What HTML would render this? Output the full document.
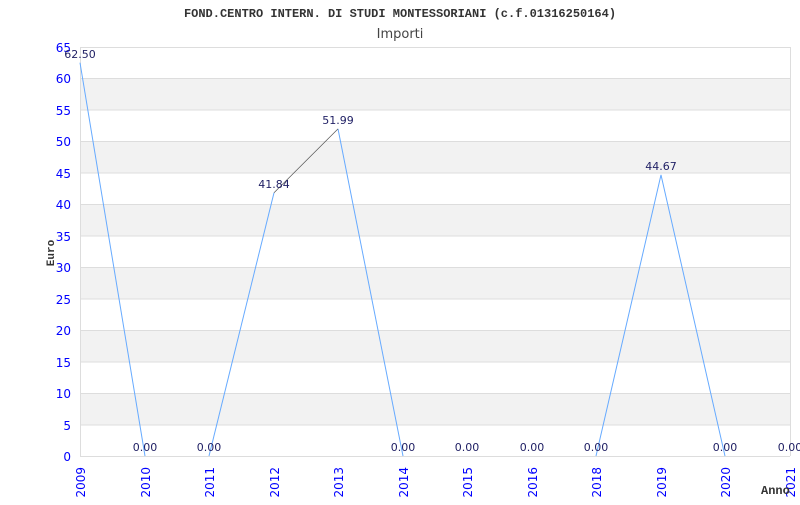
<!DOCTYPE html>
<html><head><meta charset="utf-8"><style>
body{margin:0;background:#fff;width:800px;height:500px;overflow:hidden}
</style></head><body>
<svg width="800" height="500" xmlns="http://www.w3.org/2000/svg" font-family="'DejaVu Sans','Liberation Sans',sans-serif">
<text x="400" y="17" text-anchor="middle" font-family="'Liberation Mono','DejaVu Sans Mono',monospace" font-weight="bold" font-size="12" fill="#333">FOND.CENTRO INTERN. DI STUDI MONTESSORIANI (c.f.01316250164)</text>
<text x="400" y="38" text-anchor="middle" font-size="13" fill="#444">Importi</text>
<g fill="#f2f2f2">
<rect x="80" y="78.5" width="710" height="31.5"/>
<rect x="80" y="141.4" width="710" height="31.5"/>
<rect x="80" y="204.3" width="710" height="31.5"/>
<rect x="80" y="267.2" width="710" height="31.5"/>
<rect x="80" y="330.1" width="710" height="31.5"/>
<rect x="80" y="393" width="710" height="31.5"/>
</g>
<g stroke="#ddd" stroke-width="1">
<line x1="80" y1="47.5" x2="790" y2="47.5"/><line x1="80" y1="78.5" x2="790" y2="78.5"/><line x1="80" y1="110" x2="790" y2="110"/><line x1="80" y1="141.5" x2="790" y2="141.5"/><line x1="80" y1="173" x2="790" y2="173"/><line x1="80" y1="204.5" x2="790" y2="204.5"/><line x1="80" y1="236" x2="790" y2="236"/><line x1="80" y1="267.5" x2="790" y2="267.5"/><line x1="80" y1="299" x2="790" y2="299"/><line x1="80" y1="330.5" x2="790" y2="330.5"/><line x1="80" y1="362" x2="790" y2="362"/><line x1="80" y1="393.5" x2="790" y2="393.5"/><line x1="80" y1="425" x2="790" y2="425"/><line x1="80" y1="456.5" x2="790" y2="456.5"/>
<line x1="80.5" y1="47" x2="80.5" y2="456"/><line x1="790.5" y1="47" x2="790.5" y2="456"/>
</g>
<g fill="#00f" font-size="12" text-anchor="end">
<text x="71" y="52">65</text><text x="71" y="83">60</text><text x="71" y="115">55</text><text x="71" y="146">50</text><text x="71" y="178">45</text><text x="71" y="209">40</text><text x="71" y="241">35</text><text x="71" y="272">30</text><text x="71" y="304">25</text><text x="71" y="335">20</text><text x="71" y="367">15</text><text x="71" y="398">10</text><text x="71" y="430">5</text><text x="71" y="461">0</text>
</g>
<text transform="translate(54,253) rotate(-90)" text-anchor="middle" font-family="'Liberation Mono',monospace" font-weight="bold" font-size="11" fill="#333">Euro</text>
<g fill="#00f" font-size="12" text-anchor="end">
<text transform="translate(85,467) rotate(-90)">2009</text>
<text transform="translate(150,467) rotate(-90)">2010</text>
<text transform="translate(214,467) rotate(-90)">2011</text>
<text transform="translate(279,467) rotate(-90)">2012</text>
<text transform="translate(343,467) rotate(-90)">2013</text>
<text transform="translate(408,467) rotate(-90)">2014</text>
<text transform="translate(472,467) rotate(-90)">2015</text>
<text transform="translate(537,467) rotate(-90)">2016</text>
<text transform="translate(601,467) rotate(-90)">2018</text>
<text transform="translate(666,467) rotate(-90)">2019</text>
<text transform="translate(730,467) rotate(-90)">2020</text>
<text transform="translate(795,467) rotate(-90)">2021</text>
</g>
<text x="761" y="494" font-family="'Liberation Mono',monospace" font-weight="bold" font-size="12" fill="#333">Anno</text>
<g fill="none" stroke="#6af" stroke-width="1">
<polyline points="80,62.7 145,456"/>
<polyline points="209,456 274,192.7"/>
<polyline points="338,128.9 403,456"/>
<polyline points="596,456 661,174.9 725,456"/>
</g>
<line x1="274" y1="192.7" x2="338" y2="128.9" stroke="#555" stroke-width="0.7"/>
<g fill="#226" font-size="11" text-anchor="middle">
<text x="80" y="58">62.50</text>
<text x="145" y="451">0.00</text>
<text x="209" y="451">0.00</text>
<text x="274" y="188">41.84</text>
<text x="338" y="124">51.99</text>
<text x="403" y="451">0.00</text>
<text x="467" y="451">0.00</text>
<text x="532" y="451">0.00</text>
<text x="596" y="451">0.00</text>
<text x="661" y="170">44.67</text>
<text x="725" y="451">0.00</text>
<text x="790" y="451">0.00</text>
</g>
</svg>
</body></html>
